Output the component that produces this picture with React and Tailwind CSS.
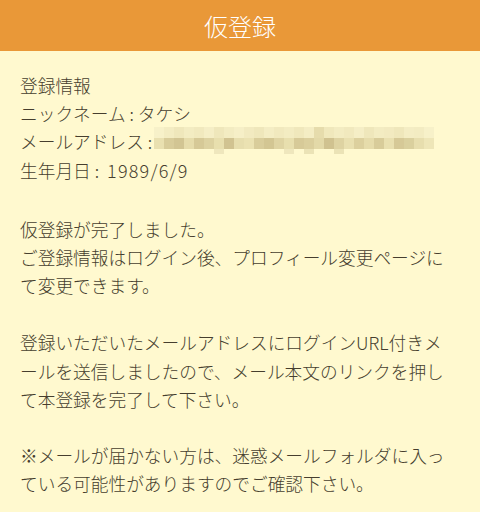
const mosaicTop = [
  "bg-[#f7f1c9]", "bg-[#f3ecc2]", "bg-[#efe7bb]", "bg-[#f3ecc2]", "bg-[#f1e9be]", "bg-[#f5eec6]", "bg-[#efe7bb]",
  "bg-[#f3ecc2]", "bg-[#f6efc7]", "bg-[#f2eac0]", "bg-[#efe7bb]", "bg-[#f4edc4]", "bg-[#f1e9be]", "bg-[#f3ecc2]",
  "bg-[#f0e8bc]", "bg-[#f4edc4]", "bg-[#e6dcac]", "bg-[#f0e8bc]", "bg-[#f3ecc2]", "bg-[#f1e9be]", "bg-[#f5eec6]",
  "bg-[#efe7bb]", "bg-[#f3ecc2]", "bg-[#f2eac0]", "bg-[#efe7bb]", "bg-[#f4edc4]", "bg-[#f3ecc2]", "bg-[#f7f1c9]",
];

const mosaicMid = [
  "bg-[#e9e0b0]", "bg-[#d8cc9a]", "bg-[#d2c593]", "bg-[#e6dcab]", "bg-[#d6c997]", "bg-[#ddd2a1]", "bg-[#e8dfae]",
  "bg-[#d1c391]", "bg-[#e7deae]", "bg-[#ebe2b2]", "bg-[#d9cd9b]", "bg-[#d3c693]", "bg-[#dfd4a3]", "bg-[#e8dfae]",
  "bg-[#d7ca98]", "bg-[#dbcf9d]", "bg-[#e3d9a8]", "bg-[#d0c290]", "bg-[#ded3a2]", "bg-[#e9e0b0]", "bg-[#dcd09e]",
  "bg-[#e6dcab]", "bg-[#d8cc9a]", "bg-[#e9e0b0]", "bg-[#d6c997]", "bg-[#dad09e]", "bg-[#e7deae]", "bg-[#eee6b8]",
];

const mosaicLow = [
  "", "", "", "", "", "", "bg-[#efe7bd]", "", "", "", "", "", "", "bg-[#efe7bd]",
  "", "bg-[#ebe3b6]", "", "", "bg-[#ebe3b6]", "", "", "", "", "", "", "", "", "",
];

function Mosaic() {
  return (
    <span className="inline-flex flex-col align-middle ml-[2px] -mt-[2px]">
      <span className="flex">
        {mosaicTop.map((c, i) => (
          <span key={i} className={`w-[10px] h-[11px] ${c}`} />
        ))}
      </span>
      <span className="flex">
        {mosaicMid.map((c, i) => (
          <span key={i} className={`w-[10px] h-[11px] ${c}`} />
        ))}
      </span>
      <span className="flex">
        {mosaicLow.map((c, i) => (
          <span key={i} className={`w-[10px] h-[5px] ${c}`} />
        ))}
      </span>
    </span>
  );
}

export default function App() {
  return (
    <div
      className="w-[480px] h-[512px] overflow-hidden bg-[#fff9cf]"
      style={{ fontFamily: '"Noto Sans CJK JP", "Noto Sans", sans-serif' }}
    >
      {/* Header */}
      <header className="h-[51px] bg-[#e99838] flex items-center justify-center">
        <h1 className="text-[24px] text-white leading-none font-light">仮登録</h1>
      </header>

      {/* Body */}
      <main className="px-5 pt-[20px] text-[17.7px] leading-[28.2px] font-light text-[#463e2e] whitespace-nowrap">
        <p>
          登録情報
          <br />
          ニックネーム : タケシ
          <br />
          <span className="inline-flex items-center h-[28.2px]">
            メールアドレス :
            <Mosaic />
          </span>
          <br />
          生年月日 :
          <span className="ml-[8px] text-[18px] tracking-[1.2px]">1989/6/9</span>
        </p>

        <p className="mt-[31px]">
          仮登録が完了しました。
          <br />
          ご登録情報はログイン後、プロフィール変更ページに
          <br />
          て変更できます。
        </p>

        <p className="mt-[29px]">
          登録いただいたメールアドレスにログインURL付きメ
          <br />
          ールを送信しましたので、メール本文のリンクを押し
          <br />
          て本登録を完了して下さい。
        </p>

        <p className="mt-[28px]">
          ※メールが届かない方は、迷惑メールフォルダに入っ
          <br />
          ている可能性がありますのでご確認下さい。
        </p>
      </main>
    </div>
  );
}
